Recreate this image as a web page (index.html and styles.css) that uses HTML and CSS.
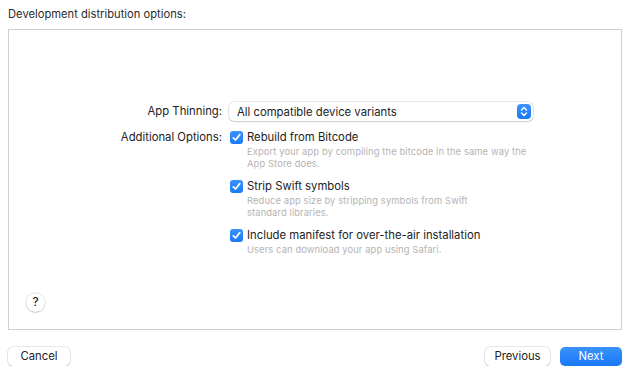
FILE: index.html
```html
<!DOCTYPE html>
<html>
<head>
<title>Distribution options</title>
<link rel="stylesheet" href="styles.css">
</head>
<body>
<div class="sheet">
	<div class="heading">Development distribution options:</div>

	<div class="panel">
		<div class="form">
			<div class="label label-popup">App Thinning:</div>
			<div class="popup">
				<span>All compatible device variants</span>
				<span class="stepper">
					<svg width="8" height="11" viewBox="0 0 8 11"><path d="M1.5 4 L4 1.5 L6.5 4 M1.5 7 L4 9.5 L6.5 7" fill="none" stroke="#fff" stroke-width="1.4" stroke-linecap="round" stroke-linejoin="round"/></svg>
				</span>
			</div>

			<div class="label">Additional Options:</div>
			<div class="options">
				<div class="option">
					<div class="check-row"><span class="check"><svg width="11" height="11" viewBox="0 0 11 11"><path d="M2.3 5.8 L4.5 8 L8.8 2.6" fill="none" stroke="#fff" stroke-width="1.7" stroke-linecap="round" stroke-linejoin="round"/></svg></span>Rebuild from Bitcode</div>
					<div class="desc">Export your app by compiling the bitcode in the same way the<br>App Store does.</div>
				</div>
				<div class="option">
					<div class="check-row"><span class="check"><svg width="11" height="11" viewBox="0 0 11 11"><path d="M2.3 5.8 L4.5 8 L8.8 2.6" fill="none" stroke="#fff" stroke-width="1.7" stroke-linecap="round" stroke-linejoin="round"/></svg></span>Strip Swift symbols</div>
					<div class="desc">Reduce app size by stripping symbols from Swift<br>standard libraries.</div>
				</div>
				<div class="option">
					<div class="check-row"><span class="check"><svg width="11" height="11" viewBox="0 0 11 11"><path d="M2.3 5.8 L4.5 8 L8.8 2.6" fill="none" stroke="#fff" stroke-width="1.7" stroke-linecap="round" stroke-linejoin="round"/></svg></span>Include manifest for over-the-air installation</div>
					<div class="desc">Users can download your app using Safari.</div>
				</div>
			</div>
		</div>
		<div class="help">?</div>
	</div>

	<div class="footer">
		<div class="btn">Cancel</div>
		<div class="nav">
			<div class="btn btn-prev">Previous</div>
			<div class="btn btn-next">Next</div>
		</div>
	</div>
</div>
</body>
</html>
```

FILE: styles.css
```css
body {
	margin: 0;
	background: #fff;
	font-family: Inter, "Liberation Sans", sans-serif;
	color: #222;
	-webkit-font-smoothing: antialiased;
}
.sheet {
	width: 614px;
	padding: 7px 10px 0 8px;
}
.heading {
	font-size: 11.2px;
	line-height: 15px;
	height: 22px;
	color: #2b2b2b;
}
.panel {
	height: 301px;
	border: 1px solid #cfcfcf;
	display: flex;
	flex-direction: column;
	justify-content: space-between;
	padding: 72px 0 17px;
	box-sizing: border-box;
}
.form {
	display: grid;
	grid-template-columns: 213px auto;
	column-gap: 7px;
	row-gap: 9px;
	align-items: start;
}
.label {
	text-align: right;
	font-size: 11.3px;
	line-height: 14px;
}
.label-popup { line-height: 19px; }
.popup {
	width: 304px;
	height: 19px;
	box-sizing: border-box;
	border-radius: 5px;
	background: #fff;
	box-shadow: 0 0 0 0.5px rgba(0,0,0,0.18), 0 1px 1.5px rgba(0,0,0,0.12);
	display: flex;
	align-items: center;
	justify-content: space-between;
	padding: 0 2px 0 8px;
	font-size: 11.3px;
}
.stepper {
	width: 14px;
	height: 15px;
	border-radius: 4px;
	background: linear-gradient(#3b93fc, #1a7af6);
	display: flex;
	align-items: center;
	justify-content: center;
}
.options {
	display: flex;
	flex-direction: column;
	gap: 9px;
}
.check-row {
	display: flex;
	align-items: center;
	font-size: 11.3px;
	line-height: 14px;
}
.check {
	width: 13px;
	height: 13px;
	border-radius: 3px;
	background: linear-gradient(#3892fb, #1b7bf6);
	display: flex;
	align-items: center;
	justify-content: center;
	margin: 0 4px 0 1px;
}
.desc {
	margin-top: 2px;
	padding-left: 18px;
	font-size: 9.4px;
	line-height: 12px;
	color: #b4b4b4;
	letter-spacing: 0.1px;
}
.help {
	width: 19px;
	height: 19px;
	margin-left: 17px;
	border-radius: 50%;
	box-shadow: 0 0 0 0.5px rgba(0,0,0,0.18), 0 1px 1.5px rgba(0,0,0,0.12);
	font-size: 11.5px;
	font-weight: 500;
	line-height: 19px;
	text-align: center;
}
.footer {
	display: flex;
	justify-content: space-between;
	margin-top: 17px;
}
.nav {
	display: flex;
	gap: 10px;
}
.btn {
	width: 62px;
	height: 19px;
	box-sizing: border-box;
	border-radius: 5px;
	background: #fff;
	box-shadow: 0 0 0 0.5px rgba(0,0,0,0.18), 0 1px 1.5px rgba(0,0,0,0.12);
	font-size: 11.3px;
	line-height: 19px;
	text-align: center;
}
.btn-prev { width: 65px; }
.btn-next {
	color: #fff;
	background: linear-gradient(#3a92fc, #1978f5);
	box-shadow: 0 1px 1px rgba(0,0,0,0.1);
}
```
